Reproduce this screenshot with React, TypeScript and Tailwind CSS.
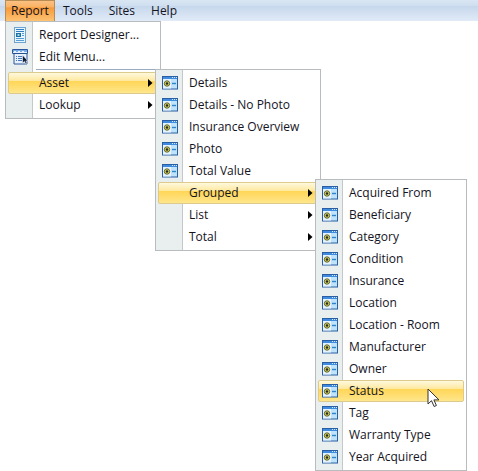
import type { ReactNode } from 'react';

interface MenuEntry {
  label: string;
  icon?: ReactNode;
  active?: boolean;
  divider?: boolean;
  hasSubmenu?: boolean;
  children?: MenuEntry[];
}

function FormIcon() {
  return (
    <svg width="16" height="14" viewBox="0 0 16 14" aria-hidden="true">
      <rect x="0.5" y="0.5" width="15" height="12.5" fill="#bfe3fb" stroke="#2a5ea3" />
      <rect x="1" y="1" width="14" height="2" fill="#3f8be0" />
      <path d="M10 1.5h1M12 1.5h1M14 1.5h1" stroke="#d5ebff" />
      <rect x="1" y="3" width="8" height="9.5" fill="#e6f3fd" />
      <circle cx="5" cy="7.5" r="2.7" fill="#e0da55" stroke="#5d6236" />
      <circle cx="5" cy="7.5" r="1.3" fill="#23291f" />
      <path d="M10 7.5h4" stroke="#2f83c9" strokeWidth="1.4" />
    </svg>
  );
}

function ReportIcon() {
  return (
    <svg width="16" height="16" viewBox="0 0 16 16" aria-hidden="true">
      <rect x="2.5" y="0.5" width="11" height="15" fill="#e9f5fd" stroke="#6fa3cf" />
      <path d="M4 2.5h8" stroke="#2f7fc0" />
      <path d="M4 4.5h8" stroke="#2f7fc0" />
      <rect x="4" y="6" width="5" height="4" fill="#1f6ca8" />
      <rect x="5.5" y="7" width="2" height="2" fill="#9fe0d8" />
      <path d="M10 6.5h2M10 8.5h2M4 11.5h8M4 13.5h8" stroke="#559dd4" />
    </svg>
  );
}

function EditMenuIcon() {
  return (
    <svg width="16" height="16" viewBox="0 0 16 16" aria-hidden="true">
      <path d="M0.5 0.5h15v4h-0.5v10.5h-13v-10.5h-1.5z" fill="#e6f1fc" stroke="#2b579c" />
      <path d="M1 2h14" stroke="#78aae6" strokeWidth="2" />
      <path d="M2 2.5h2M6 2.5h2M10 2.5h2" stroke="#e8f3ff" />
      <path d="M1 4.5h14" stroke="#27508f" />
      <path d="M4 7.5h1M6 7.5h4M4 9.5h1M6 9.5h4M4 11.5h1M6 11.5h4" stroke="#4377b8" />
      <path d="M10.5 6v8l2-1.6 1.2 2.6 1.4-.7-1.2-2.4h2z" fill="#111c3a" stroke="#fff" strokeWidth="0.5" />
    </svg>
  );
}

function Pointer() {
  return (
    <svg className="absolute top-2 right-6 z-10" width="13" height="20" viewBox="0 0 13 20" aria-hidden="true">
      <path
        d="M1 1v15l3.5-3.3 2.6 5.8 2.3-1-2.5-5.6H12z"
        fill="#fff"
        stroke="#333"
        strokeLinejoin="round"
      />
    </svg>
  );
}

const form = <FormIcon />;

const groupedMenu: MenuEntry[] = [
  { label: 'Acquired From', icon: form },
  { label: 'Beneficiary', icon: form },
  { label: 'Category', icon: form },
  { label: 'Condition', icon: form },
  { label: 'Insurance', icon: form },
  { label: 'Location', icon: form },
  { label: 'Location - Room', icon: form },
  { label: 'Manufacturer', icon: form },
  { label: 'Owner', icon: form },
  { label: 'Status', icon: form, active: true },
  { label: 'Tag', icon: form },
  { label: 'Warranty Type', icon: form },
  { label: 'Year Acquired', icon: form },
];

const assetMenu: MenuEntry[] = [
  { label: 'Details', icon: form },
  { label: 'Details - No Photo', icon: form },
  { label: 'Insurance Overview', icon: form },
  { label: 'Photo', icon: form },
  { label: 'Total Value', icon: form },
  { label: 'Grouped', active: true, hasSubmenu: true, children: groupedMenu },
  { label: 'List', hasSubmenu: true },
  { label: 'Total', hasSubmenu: true },
];

const reportMenu: MenuEntry[] = [
  { label: 'Report Designer...', icon: <ReportIcon /> },
  { label: 'Edit Menu...', icon: <EditMenuIcon /> },
  { label: 'Asset', active: true, divider: true, hasSubmenu: true, children: assetMenu },
  { label: 'Lookup', hasSubmenu: true },
];

// menu widths by nesting level
const widths = ['w-[156px]', 'w-[166px]', 'w-[152px]'];

function Menu({ entries, level = 0 }: { entries: MenuEntry[]; level?: number }) {
  return (
    <ul
      role="menu"
      className={`${widths[level]} border border-[#b9bcbf] bg-white bg-[linear-gradient(to_right,#e9eeee_26px,#c5c8c9_26px,#c5c8c9_27px,#ffffff_27px)] p-0.5`}
    >
      {entries.map((entry) => (
        <li key={entry.label} role="none">
          {entry.divider && <div className="mt-px mb-0.5 ml-7 h-px bg-[#9aabc2]" />}
          <div className="relative">
            <button
              type="button"
              role="menuitem"
              aria-haspopup={entry.hasSubmenu ? 'menu' : undefined}
              className={`flex h-[22px] w-full items-center border pr-1 pl-[3px] text-left ${
                entry.active
                  ? 'rounded-xs border-[#dccb8c] bg-[linear-gradient(to_bottom,#fff9dd_0%,#ffe9a0_38%,#ffd657_42%,#ffe68c_100%)]'
                  : 'border-transparent'
              }`}
            >
              <span className="flex w-[27px] shrink-0 items-center">{entry.icon}</span>
              <span className="grow whitespace-nowrap">{entry.label}</span>
              {entry.hasSubmenu && (
                <svg width="5" height="8" viewBox="0 0 5 8" aria-hidden="true">
                  <path d="M0 0l4.5 4L0 8z" fill="#000" />
                </svg>
              )}
            </button>
            {entry.label === 'Status' && <Pointer />}
            {entry.children && (
              <div className="absolute -top-[3px] left-full z-10 -ml-[3px]">
                <Menu entries={entry.children} level={level + 1} />
              </div>
            )}
          </div>
        </li>
      ))}
    </ul>
  );
}

export default function App() {
  return (
    <div className="min-h-screen bg-white font-['Open_Sans','Noto_Sans',sans-serif] text-[12px] leading-4 text-[#14141e]">
      <nav className="flex h-[21px] bg-[linear-gradient(to_bottom,#d9e5f2_0%,#cfdff0_28%,#c6d7ec_29%,#e1ebf8_100%)] pl-[5px]">
        <div className="relative">
          <button
            type="button"
            aria-expanded="true"
            className="h-full border border-b-0 border-[#b98d52] bg-[linear-gradient(to_bottom,#fbc083_0%,#fab263_30%,#f79a3a_34%,#fdc272_100%)] px-[5px]"
          >
            Report
          </button>
          <div className="absolute top-full left-0">
            <Menu entries={reportMenu} />
          </div>
        </div>
        <button type="button" className="px-2">Tools</button>
        <button type="button" className="px-2">Sites</button>
        <button type="button" className="px-2">Help</button>
      </nav>
    </div>
  );
}
